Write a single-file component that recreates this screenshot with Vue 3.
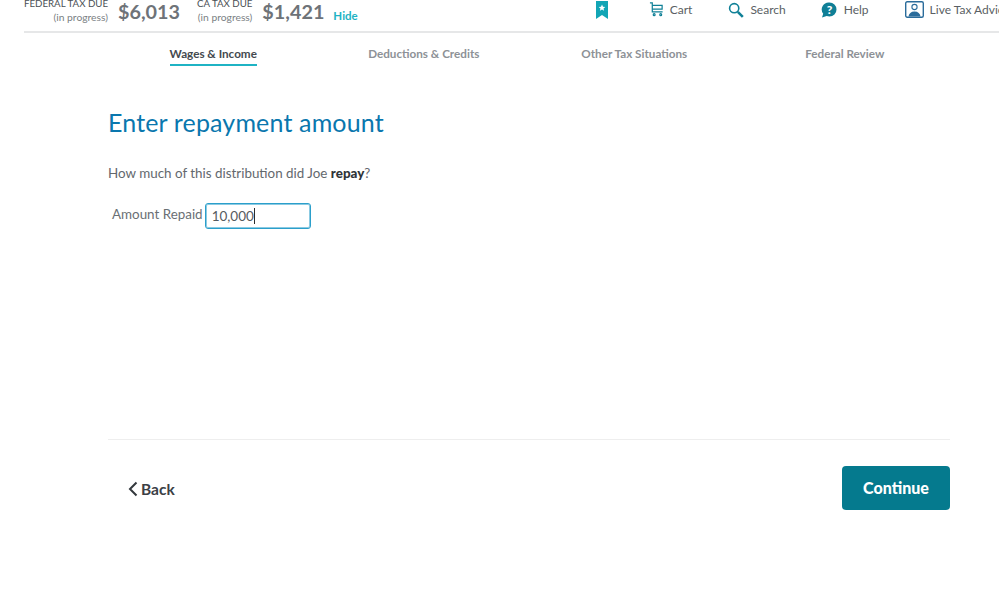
<template>
  <div class="page">
    <header class="topbar">
      <div class="tax-block">
        <div class="tax-label">
          <span class="tax-name">FEDERAL TAX DUE</span>
          <span class="tax-note">(in progress)</span>
        </div>
        <span class="tax-amount">$6,013</span>
      </div>
      <div class="tax-block second">
        <div class="tax-label">
          <span class="tax-name">CA TAX DUE</span>
          <span class="tax-note">(in progress)</span>
        </div>
        <span class="tax-amount">$1,421</span>
      </div>
      <a class="hide-link">Hide</a>

      <nav class="tools">
        <svg class="bookmark" width="12" height="18" viewBox="0 0 12 18">
          <path d="M0 0h12v18l-6-4-6 4z" fill="#12a5b5" />
          <path d="M6 3.600l1 2.200 2.300.2-1.800 1.500.6 2.300L6 8.600 3.900 9.800l.6-2.300L2.700 6l2.300-.2z" fill="#fff" />
        </svg>
        <a class="tool cart">
          <svg width="15" height="15" viewBox="0 0 16 16" fill="none" stroke="#0f8097" stroke-width="1.300">
            <path d="M1 1h2.500v9.500h11" />
            <path d="M3.500 3.500h10.500v4H3.500" />
            <circle cx="5.500" cy="13.500" r="1" />
            <circle cx="12.500" cy="13.500" r="1" />
          </svg>
          Cart
        </a>
        <a class="tool search">
          <svg width="16" height="16" viewBox="0 0 16 16" fill="none" stroke="#0f8097">
            <circle cx="6.200" cy="6.200" r="4.600" stroke-width="1.600" />
            <path d="M9.800 9.800l5 5" stroke-width="2.600" />
          </svg>
          Search
        </a>
        <a class="tool help">
          <svg width="16" height="16" viewBox="0 0 16 16">
            <path d="M8.500.5a7 7 0 0 1 0 14c-1 0-2-.2-2.800-.5L1 15.500l1.200-3.800A7 7 0 0 1 8.500.5z" fill="#0f7f96" />
            <text x="8.500" y="12" text-anchor="middle" class="help-mark">?</text>
          </svg>
          Help
        </a>
        <a class="tool live">
          <svg width="19" height="17" viewBox="0 0 19 17">
            <rect x=".7" y=".7" width="17.600" height="15.600" rx="1.500" fill="#fff" stroke="#2b6c9b" stroke-width="1.400" />
            <circle cx="9.500" cy="6" r="2.600" fill="#fff" stroke="#2b6c9b" stroke-width="1.100" />
            <path d="M3.500 15.500c.3-3 2.500-5 6-5s5.700 2 6 5z" fill="#2b6c9b" />
          </svg>
          Live Tax Advice
        </a>
      </nav>
    </header>

    <div class="wrap">
      <nav class="steps">
        <div v-for="step in steps" :key="step" class="step">
          <span class="step-label" :class="{ active: step === activeStep }">{{ step }}</span>
        </div>
      </nav>

      <main class="content">
        <h1 class="title">Enter repayment amount</h1>
        <p class="question">How much of this distribution did Joe <b>repay</b>?</p>
        <div class="field">
          <label class="field-label">Amount Repaid</label>
          <div class="input">{{ amount }}<span class="caret"></span></div>
        </div>
      </main>

      <footer class="actions">
        <a class="back">
          <svg width="10" height="16" viewBox="0 0 10 16" fill="none" stroke="#33383d" stroke-width="2">
            <path d="M8.500 1.500L2 8l6.500 6.500" />
          </svg>
          Back
        </a>
        <button class="continue">Continue</button>
      </footer>
    </div>
  </div>
</template>

<script setup>
const steps = ['Wages & Income', 'Deductions & Credits', 'Other Tax Situations', 'Federal Review']
const activeStep = 'Wages & Income'
const amount = '10,000'
</script>

<style>
html,
body {
  margin: 0;
  background: #fff;
  overflow: hidden;
}
</style>

<style scoped>
.page {
  width: 999px;
  height: 593px;
  overflow: hidden;
  font-family: Lato, 'Noto Sans', sans-serif;
  color: #555b60;
  background: #fff;
}

.topbar {
  display: flex;
  align-items: flex-start;
  width: 1040px;
  height: 31px;
  margin-left: 24px;
  border-bottom: 2px solid #e6e7e8;
  white-space: nowrap;
}

.tax-block {
  display: flex;
  align-items: flex-start;
  gap: 10px;
}

.tax-block.second {
  margin-left: 17px;
}

.tax-label {
  display: flex;
  flex-direction: column;
  align-items: flex-end;
  margin-top: -3px;
}

.tax-name {
  font-size: 9.700px;
  line-height: 12px;
  color: #4a4f54;
}

.tax-note {
  margin-top: 2px;
  font-size: 10.300px;
  line-height: 13px;
  color: #7a7f84;
}

.tax-amount {
  font-size: 19.800px;
  line-height: 22px;
  font-weight: 700;
  color: #6e7378;
}

.hide-link {
  margin: 9px 0 0 9px;
  font-size: 11.500px;
  line-height: 14px;
  font-weight: 700;
  color: #1fb3c4;
}

.tools {
  display: flex;
  align-items: center;
  height: 19px;
  margin-left: 238px;
}

.tool {
  display: flex;
  align-items: center;
  font-size: 12px;
  color: #5a5f64;
}

.cart {
  gap: 6px;
  margin-left: 41px;
}

.search {
  gap: 6px;
  margin-left: 36px;
}

.help {
  gap: 7px;
  margin-left: 35px;
}

.live {
  gap: 6px;
  margin-left: 36px;
}

.help-mark {
  font-size: 12px;
  font-weight: 900;
  fill: #fff;
}

.wrap {
  width: 842px;
  margin-left: 108px;
}

.steps {
  display: grid;
  grid-template-columns: repeat(4, 1fr);
  height: 33px;
}

.step {
  display: flex;
  justify-content: center;
}

.step-label {
  height: 21px;
  margin-top: 12px;
  font-size: 11.700px;
  line-height: 17px;
  font-weight: 700;
  color: #8d9196;
  box-sizing: border-box;
}

.step-label.active {
  color: #44494e;
  border-bottom: 2px solid #1fb3c4;
}

.content {
  height: 374px;
  padding-top: 41px;
  border-bottom: 1px solid #eeeeee;
  box-sizing: border-box;
}

.title {
  margin: 0;
  font-size: 25px;
  line-height: 30px;
  font-weight: 400;
  color: #0a77ae;
  letter-spacing: 0.15px;
}

.question {
  margin: 27px 0 0;
  font-size: 13.400px;
  line-height: 18px;
  color: #63686d;
}

.question b {
  font-weight: 900;
  color: #2f3438;
}

.field {
  display: flex;
  align-items: center;
  gap: 2px;
  margin: 21px 0 0 4px;
}

.field-label {
  font-size: 13.400px;
  line-height: 18px;
  margin-top: -4px;
  color: #6a6f74;
}

.input {
  display: flex;
  align-items: center;
  width: 106px;
  height: 26px;
  padding-left: 6px;
  box-sizing: border-box;
  border: 1px solid #2b9fcb;
  border-radius: 3px;
  box-shadow: inset 0 0 0 1px rgba(43, 159, 203, 0.55);
  font-size: 13.500px;
  color: #565b60;
}

.caret {
  width: 1px;
  height: 16px;
  background: #2b2b2b;
}

.actions {
  display: flex;
  justify-content: space-between;
  align-items: center;
  height: 44px;
  margin-top: 26px;
}

.back {
  display: flex;
  align-items: center;
  gap: 3px;
  margin-left: 20px;
  padding-top: 2px;
  font-size: 15.500px;
  font-weight: 700;
  color: #3b4045;
}

.continue {
  width: 108px;
  height: 44px;
  padding: 0 0 2px;
  border: 0;
  border-radius: 4px;
  background: #057a8e;
  color: #fff;
  font-family: inherit;
  font-size: 16px;
  font-weight: 900;
}
</style>
